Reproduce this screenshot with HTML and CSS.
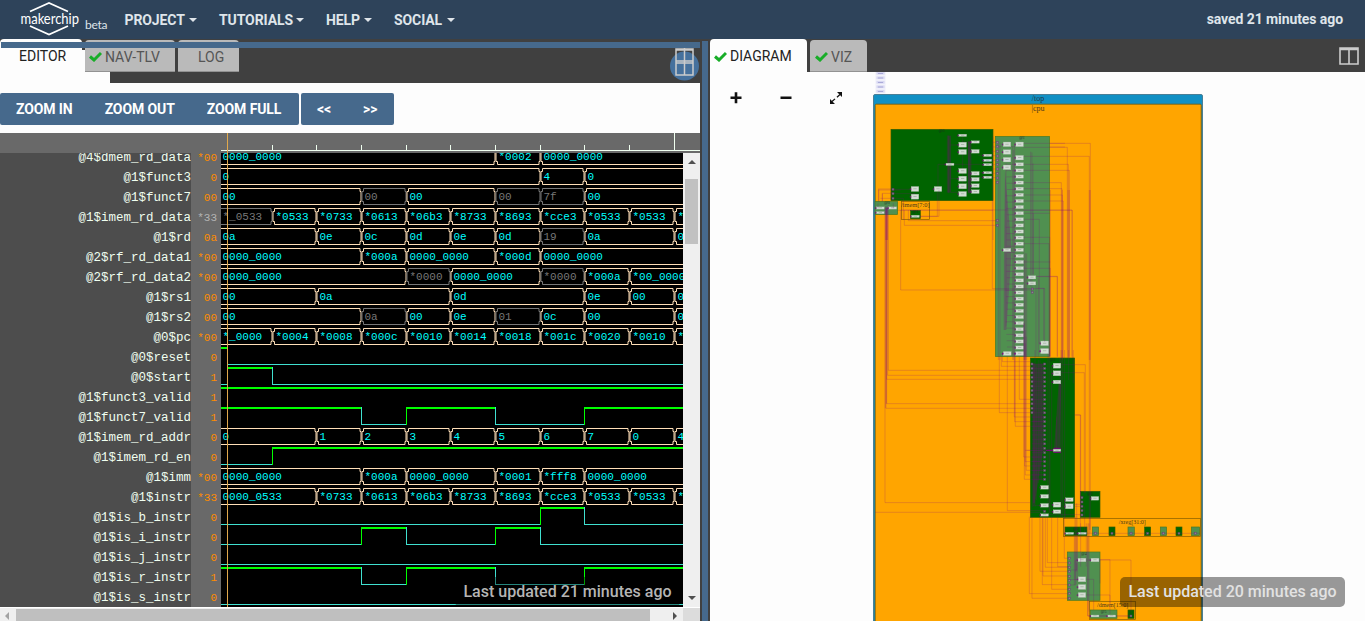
FILE: index.html
```html
<!DOCTYPE html>
<html lang="en">
<head>
<meta charset="utf-8">
<title>Makerchip</title>
<link rel="stylesheet" href="styles.css">
</head>
<body>
<header class="topbar">
  <div class="brand">
    <svg class="logo" width="64" height="39" viewBox="0 0 64 39">
      <path class="hex" d="M12 11.5 31 3 50 11.5M12 26 31 34.5 50 26"/>
      <text class="logo-text" x="2.5" y="24" textLength="58.5" lengthAdjust="spacingAndGlyphs">makerchip</text>
    </svg>
    <span class="beta">beta</span>
  </div>
  <nav class="menu">
    <a class="menu-item">PROJECT<i class="caret"></i></a>
    <a class="menu-item">TUTORIALS<i class="caret"></i></a>
    <a class="menu-item">HELP<i class="caret"></i></a>
    <a class="menu-item">SOCIAL<i class="caret"></i></a>
  </nav>
  <span class="saved">saved 21 minutes ago</span>
</header>
<main class="panes">
  <section class="pane left">
    <div class="tabstrip">
      <div class="under-tab"></div>
      <div class="tab active editor">EDITOR</div>
      <div class="tab nav"><svg class="check" width="13" height="11" viewBox="0 0 13 11"><path d="M1 5.5 5 9 12 2"/></svg>NAV-TLV</div>
      <div class="tab log">LOG</div>
      <div class="drop-line"></div>
      <svg class="split-icon" width="30" height="36" viewBox="0 0 30 36">
        <circle cx="14.500" cy="19" r="14.5"/>
        <path d="M6 2h17v14h-17zM6 14h17v14h-17zM14.500 1v27M6 3h17"/>
      </svg>
    </div>
    <div class="toolbar">
      <div class="group"><button class="btn">ZOOM IN</button><button class="btn">ZOOM OUT</button><button class="btn">ZOOM FULL</button></div>
      <div class="group arrows"><button class="btn">&lt;&lt;</button><button class="btn">&gt;&gt;</button></div>
    </div>
    <div class="ruler"><svg id="ruler" width="479" height="20" viewBox="221 133 479 20"></svg></div>
    <div class="viewer">
      <div class="names" id="names"></div>
      <div class="values" id="values"></div>
      <svg class="waves" id="waves" width="462" height="454" viewBox="221 153 462 454"></svg>
      <div class="vscroll">
        <i class="arrow up"></i><i class="thumb"></i><i class="arrow down"></i>
      </div>
    </div>
    <div class="hscroll"><i class="arrow prev"></i><i class="thumb"></i><i class="arrow next"></i><i class="corner"></i></div>
    <div class="toast">Last updated 21 minutes ago</div>
  </section>
  <div class="splitter"></div>
  <section class="pane right">
    <div class="tabstrip">
      <div class="tab active diagram"><svg class="check" width="13" height="11" viewBox="0 0 13 11"><path d="M1 5.5 5 9 12 2"/></svg>DIAGRAM</div>
      <div class="tab viz"><svg class="check" width="13" height="11" viewBox="0 0 13 11"><path d="M1 5.5 5 9 12 2"/></svg>VIZ</div>
      <svg class="columns-icon" width="20" height="18" viewBox="0 0 20 18"><path d="M1 1h18v16H1zM10 2v15M1 2.5h18"/></svg>
    </div>
    <svg class="graph" id="graph" width="655" height="549" viewBox="710 72 655 549"></svg>
    <div class="toast">Last updated 20 minutes ago</div>
  </section>
</main>
<script src="app.js"></script>
</body>
</html>
```
FILE: styles.css
```css
* { box-sizing: border-box; }
body { margin: 0; width: 1365px; height: 621px; overflow: hidden; display: flex; flex-direction: column; background: #fdfdfd; font-family: Roboto, "Liberation Sans", sans-serif; }
.topbar { height: 39px; flex: none; display: flex; align-items: center; background: #2e435a; color: #dfe5ea; font-weight: 700; }
.brand { display: flex; width: 124.5px; padding-left: 18px; height: 39px; }
.logo { flex: none; }
.hex { fill: none; stroke: #fff; stroke-width: 1.7; }
.logo-text { font: 15px Lato, sans-serif; fill: #fff; }
.beta { font: 12px/16px Lato, sans-serif; padding: 17px 0 0 3px; letter-spacing: -.3px; }
.menu { display: flex; font-size: 14px; letter-spacing: -.1px; flex: 1; }
.menu-item { display: flex; align-items: center; justify-content: space-between; height: 38px; margin-right: 22px; }
.menu-item:nth-child(1) { width: 72.5px; }
.menu-item:nth-child(2) { width: 85px; }
.menu-item:nth-child(3) { width: 46px; }
.menu-item:nth-child(4) { width: 60.5px; }
.caret { border: 4px solid transparent; border-top-color: #dfe5ea; border-bottom: 0; margin-top: 1px; }
.saved { font-size: 14px; letter-spacing: -.08px; margin: -2px 22px 0 0; }
.panes { display: flex; height: 582px; }
.pane { position: relative; display: flex; flex-direction: column; overflow: hidden; }
.left { width: 700px; }
.right { width: 655px; }
.splitter { width: 10px; background: #46698c; border: solid #404040; border-width: 2px 2px 0; }
.tabstrip { position: relative; display: flex; align-items: flex-start; flex: none; background: #404040; }
.left .tabstrip { height: 44px; }
.right .tabstrip { height: 33px; }
.under-tab { position: absolute; left: 0; top: 11px; width: 110px; height: 33px; background: #fdfdfd; }
.tab { position: relative; display: flex; align-items: center; height: 32px; margin-top: 1px; border-radius: 4px 4px 0 0; background: #bababa; border-bottom: 1px solid #929292; color: #555; font-size: 14px; padding-top: 2px; }
.tab.active { height: 33px; margin-top: 0; background: #fdfdfd; color: #222; border: 0; }
.editor { width: 82px; padding-left: 19px; }
.nav { width: 90px; margin-left: 3px; padding-left: 4px; }
.log { width: 61px; margin-left: 3px; padding-left: 20px; }
.diagram { width: 97px; padding-left: 4px; }
.viz { width: 57px; margin-left: 3px; padding-left: 5px; }
.check { fill: none; stroke: #18ad28; stroke-width: 3; margin-right: 3px; flex: none; }
.tab.active { padding-top: 1px; }
.drop-line { position: absolute; left: 1px; right: 0; top: 3px; height: 6px; background: #46698c; }
.split-icon { position: absolute; right: 0; top: 8px; fill: none; stroke: #ccc; stroke-width: 1.5; }
.split-icon circle { fill: #46719d; stroke: none; }
.columns-icon { margin: 8px 6px 0 auto; fill: none; stroke: #ccc; stroke-width: 1.6; }
.toolbar { display: flex; gap: 2px; height: 50px; padding-top: 10px; flex: none; background: #fdfdfd; }
.group { display: flex; width: 299px; height: 32px; background: #46698c; border-radius: 2px; }
.group.arrows { width: 93px; }
.btn { border: 0; background: none; color: #fff; font: 700 14px Roboto, sans-serif; letter-spacing: -.1px; padding: 0 16px 1px; white-space: nowrap; }
.ruler { height: 20px; flex: none; padding-left: 221px; background: #696969; }
.ruler svg, .waves, .graph { display: block; flex: none; }
.viewer { display: flex; height: 454px; overflow: hidden; flex: none; }
.names, .values { margin-top: -5px; height: 459px; overflow: hidden; text-align: right; font-family: "Liberation Mono", "Courier New", monospace; flex: none; }
.names { width: 191px; background: #4d4d4d; color: #f0fff0; font-size: 12.5px; }
.values { width: 30px; padding-right: 4px; background: #696969; color: #ff8c00; font-size: 11px; }
.row { height: 20px; line-height: 20px; }
.values .dim { color: #b5b5b5; }
.waves { background: #000; }
.bus { fill: none; stroke: #ffdfb8; }
.bus-label { font: 11px "Liberation Mono", "Courier New", monospace; fill: #0ff; }
.invalid.bus { stroke: #777; }
.invalid.bus-label { fill: #777; }
.low { stroke: #40e0d0; fill: none; }
.high { stroke: #0f0; stroke-width: 2; fill: none; }
.rise { stroke: #0f0; }
.cursor { stroke: #e0a84c; }
.tick { stroke: #f0fff0; }
.vscroll { width: 17px; display: flex; flex-direction: column; align-items: center; background: #efefef; }
.arrow { border: 4px solid transparent; width: 0; height: 0; flex: none; }
.up { border-bottom-color: #505050; border-top: 0; margin: 7px 0 15px; }
.vscroll .thumb { width: 13px; height: 65px; background: #c1c1c1; }
.down { border-top-color: #505050; border-bottom: 0; margin: auto 0 7px; }
.hscroll { display: flex; align-items: center; height: 14px; flex: none; background: #efefef; border-top: 1px solid #fff; }
.prev { border-right-color: #a3a3a3; border-left: 0; margin: 2px 7px 0 5px; }
.hscroll .thumb { width: 634px; height: 12px; background: #bfbfbf; margin-top: 1px; }
.next { border-left-color: #505050; border-right: 0; margin: 2px 0 0 23px; }
.corner { width: 17px; height: 14px; margin-left: auto; background: #dcdcdc; }
.toast { position: absolute; right: 20px; bottom: 14px; height: 30px; width: 225px; border-radius: 5px; background: rgba(0,0,0,.4); color: #e2e2e2; font-size: 16px; font-weight: 500; line-height: 30px; text-align: center; white-space: nowrap; }
.left .toast { width: 225px; color: #b5b5b5; }
.scope { fill: #ffa500; stroke: #7d5a00; stroke-width: 2; }
.dark { fill: #006400; stroke: #345c00; stroke-width: 2; }
.light { fill: #509050; stroke: #4a7a20; stroke-width: 2; }
.node { fill: #d3dcd3; stroke: #8ca48c; stroke-width: 1; }
.node-mark { fill: #9aaa9a; }
.pin { fill: #800080; opacity: .75; }
.port { fill: #9a8a9a; stroke: #702880; stroke-width: 1.5; opacity: .8; }
.wire { fill: none; stroke: #800080; stroke-width: 2.4; opacity: .25; }
.haze { fill: #800080; opacity: .28; }
.glabel { font: 8px "Liberation Serif", serif; fill: #222; opacity: .8; text-anchor: middle; }
.tool { stroke: #111; stroke-width: 2.6; fill: none; }
.expand { stroke: #111; stroke-width: 1.3; fill: none; }
.expand-tip { fill: #111; }
.ghost { fill: #d8d8f2; stroke: #efeffa; }
.ghost-mark { fill: #aaaad8; }
```
FILE: app.js
```js
const NS = 'http://www.w3.org/2000/svg';
function add(parent, tag, attrs, text) {
  const el = document.createElementNS(NS, tag);
  for (const k in attrs) el.setAttribute(k, attrs[k]);
  if (text) el.textContent = text;
  parent.appendChild(el);
  return el;
}

// Cycle boundaries along the time axis
const T = [227.5, 272.5, 316.5, 361.5, 406.5, 450.5, 495.5, 540.5, 584.5, 629.5, 674.5];
const END = 690;

// Bus segments are "startCycle:text", with ! for invalid data; levels are "startCycle:level"
const signals = [
  ['@4$dmem_rd_data', '*00', '0:0000_0000 6:*0002 7:0000_0000'],
  ['@1$funct3', '0', '0:0 7:4 8:0'],
  ['@1$funct7', '00', '0:00 3:!00 4:00 6:!00 7:!7f 8:00'],
  ['@1$imem_rd_data', '*33', '0:!*_0533 1:*0533 2:*0733 3:*0613 4:*06b3 5:*8733 6:*8693 7:*cce3 8:*0533 9:*0533 10:*'],
  ['@1$rd', '0a', '0:0a 2:0e 3:0c 4:0d 5:0e 6:0d 7:!19 8:0a 10:0'],
  ['@2$rf_rd_data1', '*00', '0:0000_0000 3:*000a 4:0000_0000 6:*000d 7:0000_0000'],
  ['@2$rf_rd_data2', '*00', '0:0000_0000 4:!*0000 5:0000_0000 7:!*0000 8:*000a 9:*00_0000'],
  ['@1$rs1', '00', '0:00 2:0a 5:0d 8:0e 9:00 10:0'],
  ['@1$rs2', '00', '0:00 3:!0a 4:00 5:0e 6:!01 7:0c 8:00 10:0'],
  ['@0$pc', '*00', '0:*_0000 1:*0004 2:*0008 3:*000c 4:*0010 5:*0014 6:*0018 7:*001c 8:*0020 9:*0010 10:*'],
  ['@0$reset', '0', 'L -1:1 0:0'],
  ['@0$start', '1', 'L -1:0 0:1 1:0'],
  ['@1$funct3_valid', '1', 'L -1:1'],
  ['@1$funct7_valid', '1', 'L -1:1 3:0 4:1 6:0 8:1'],
  ['@1$imem_rd_addr', '0', '0:0 2:1 3:2 4:3 5:4 6:5 7:6 8:7 9:0 10:4'],
  ['@1$imem_rd_en', '0', 'L -1:0 1:1'],
  ['@1$imm', '*00', '0:0000_0000 3:*000a 4:0000_0000 6:*0001 7:*fff8 8:0000_0000'],
  ['@1$instr', '*33', '0:0000_0533 2:*0733 3:*0613 4:*06b3 5:*8733 6:*8693 7:*cce3 8:*0533 9:*0533 10:*'],
  ['@1$is_b_instr', '0', 'L -1:0 7:1 8:0'],
  ['@1$is_i_instr', '0', 'L -1:0 3:1 4:0 6:1 7:0'],
  ['@1$is_j_instr', '0', 'L -1:0'],
  ['@1$is_r_instr', '1', 'L -1:1 3:0 4:1 6:0 8:1'],
  ['@1$is_s_instr', '0', 'L -1:0']
];

const names = document.getElementById('names');
const values = document.getElementById('values');
const waves = document.getElementById('waves');
signals.forEach(([name, value, data], i) => {
  for (const [box, text] of [[names, name], [values, value]]) {
    const row = document.createElement('div');
    row.className = 'row' + (i === 3 && box === values ? ' dim' : '');
    row.textContent = text;
    box.appendChild(row);
  }
  const y = 157 + 20 * i, hi = y - 9, lo = y + 7.5;
  const level = data.startsWith('L ');
  const segs = (level ? data.slice(2) : data).split(' ').map(s => s.split(':'));
  segs.forEach(([start, v], k) => {
    const s = +start;
    const x1 = s < 0 || (!level && s === 0) ? 215 : T[s];
    const x2 = k + 1 < segs.length ? T[+segs[k + 1][0]] : END;
    if (level) {
      if (k) add(waves, 'path', { class: v === '1' ? 'rise' : 'low', d: `M${x1} ${hi - 1}V${lo + .5}` });
      add(waves, 'path', { class: v === '1' ? 'high' : 'low', d: v === '1' ? `M${x1 - .5} ${hi}H${x2}` : `M${x1} ${lo}H${x2}` });
      return;
    }
    const bad = v[0] === '!' ? ' invalid' : '';
    const t = y - 8.5, a = x1 + .5, b = x2 - .5;
    add(waves, 'path', { class: 'bus' + bad, d: `M${a + 1.5} ${t}H${b - 1}V${t + 3}H${b}V${lo - 3}H${b - 1}V${lo}H${a + 1.5}V${lo - 3}H${a}V${t + 3}H${a + 1.5}Z` });
    add(waves, 'text', { class: 'bus-label' + bad, x: s === 0 ? 222.5 : x1 + 3, y: y + 3 }, v.replace('!', ''));
  });
});
add(waves, 'path', { class: 'cursor', d: 'M227.5 153V607' });

const ruler = document.getElementById('ruler');
add(ruler, 'path', { class: 'tick', d: 'M221 150.5H700' });
T.slice(1).forEach((x, i) => add(ruler, 'path', { class: 'tick', d: `M${x} ${i === 9 ? 133 : 145}V151` }));
add(ruler, 'path', { class: 'cursor', d: 'M227.5 133V153' });

const graph = document.getElementById('graph');
add(graph, 'path', { class: 'tool', d: 'M730.5 97.8H741.5M736 92.3V103.3M780.5 97.8H791.5' });
add(graph, 'path', { class: 'expand', d: 'M832 101.500 840 94.500', 'stroke-dasharray': '4 2.6' });
add(graph, 'path', { class: 'expand-tip', d: 'M842 92V97L837 92ZM830 104V99L835 104Z' });
for (let k = 0; k < 5; k++) {
  add(graph, 'rect', { class: 'ghost', x: 876, y: 71.500 + k * 4.5, width: 9, height: 3.5 });
  add(graph, 'rect', { class: 'ghost-mark', x: 878, y: 73 + k * 4.5, width: 5, height: 1 });
}
add(graph, 'rect', { x: 873.5, y: 94.500, width: 329, height: 540, rx: 1.5, fill: '#1190c4', stroke: '#4a7f96' });
add(graph, 'rect', { x: 875.2, y: 104.2, width: 326, height: 530, rx: 1, fill: '#ffa500', stroke: '#7d5a00', 'stroke-width': .8 });
add(graph, 'text', { class: 'glabel', x: 1038, y: 100.500 }, '/top');
add(graph, 'text', { class: 'glabel', x: 1038, y: 110.500 }, '|cpu');

// Drawing sheets work in third-of-a-pixel units from their own origin
function sheet(x, y) { return add(graph, 'g', { transform: `translate(${x} ${y}) scale(.3333)` }); }
function nums(s) { return s.trim().split(/\s*,\s*/).map(p => p.trim().split(/\s+/).map(Number)); }
function boxes(g, cls, s) { nums(s).forEach(([x, y, x2, y2]) => add(g, 'rect', { class: cls, x, y, width: x2 - x, height: y2 - y })); }
function nodes(g, w, h, s) {
  nums(s).forEach(([x, y]) => {
    add(g, 'rect', { class: 'node', x: x - w / 2, y: y - h / 2, width: w, height: h });
    add(g, 'rect', { class: 'node-mark', x: x - 5, y: y - 1.5, width: 10, height: 2 });
    add(g, 'rect', { class: 'pin', x: x - w / 2 - 4, y: y - 2, width: 4, height: 5 });
  });
}
function ports(g, s) { nums(s).forEach(([x, y]) => add(g, 'rect', { class: 'port', x: x - 3, y: y - 3, width: 6, height: 6 })); }
function wires(g, s) { s.trim().split(/\s*;\s*/).forEach(d => d && add(g, 'path', { class: 'wire', d: 'M' + d })); }
function label(g, x, y, text, size) { add(g, 'text', { class: 'glabel', x, y, style: `font-size:${size}px` }, text); }
function range(a, b, n, f) { return Array.from({ length: n }, (_, i) => f(a + (b - a) * i / (n - 1))).join(','); }

const a = sheet(865, 70), b = sheet(980, 120), c = sheet(1000, 350), d = sheet(1010, 480), e = sheet(870, 190);
boxes(a, 'dark', '78 178 384 392');
boxes(a, 'light', '30 394 98 434');
boxes(a, 'scope', '109 394 194 448');
boxes(a, 'dark', '137 421 166 446');
boxes(b, 'light', '46 49 209 710');
boxes(c, 'dark', '91 24 224 502,241 424 300 502');
boxes(d, 'scope', '161 115 572 169,238 364 376 418');
boxes(d, 'dark', '165 141 231 167,297 141 315 167,404 141 422 167,498 141 516 167,354 390 372 415');
boxes(d, 'light', '247 141 266 167,354 141 373 167,451 141 470 167,544 141 569 167,172 216 270 361,241 390 321 415');

// Long routes between pipeline stages
wires(e, `92 60V300H486;92 60H606V500;103 60V106H380;115 60V92H380;45 55V938H480;48 50V655H480;50 50V641H480;50 55V568H480;53 55V556H480;55 45V541H480;
46 50V655;49 50V641;15 967H513;367 30V296H524V455;388 500V668H480;394 500V529H480;397 500V515H480;412 500V962H520;433 500V681H520;436 500V709H520;434 490V695H520;
448 500V628H480;463 400V868H520;466 420V855H520;469 440V841H520;464 440V828H520;466 460V815H520;461 400V801H520;478 980V1211H595;486 980V1225H595;510 980V1144H595;
517 980V1184H595;519 980V1158H595;526 980V1132H595;532 980V1118H595;545 980V1198H595;563 980V1130H595;583 980V1105H595;615 980V1170;618 980V1184;621 980V1144;632 1000V1130;
594 500V0;598 0V500;658 0V1020;661 0V1020;541 0V500;577 0V510;562 500V260H500;616 675H632V960;649 1000V1130;654 1000V1278H662;657 1000V1265;690 1109H720V1240;
26 35V0H92;37 35V10H65;63 33V5;207 0V79H150;24 40V55;70 40V55`);
wires(a, `85 358H140;85 371H150V380;85 385H115V450;98 421H384;217 366V439H165;219 350V283H243;247 196V367H283;251 196V370;255 225H282;257 290V326H282;293 202V360;
310 216H320;310 216V370;314 216V370;318 216V367;290 216H335;267 283H357;340 256H357;341 308H357;335 322H357;384 217H397;380 231H397;380 244H397;380 257H397;380 271H397;380 284H397;380 297H397;
380 310H397;380 323H397;384 200V510;39 357H78;41 357V394;46 385H78;52 371V394;475 220H600;475 231H600;480 230V510;505 230V510;491 260V510`);
add(a, 'path', { class: 'haze', d: 'M411 290 420 310 436 510H419Z' });
add(a, 'path', { class: 'haze', d: 'M309 215H317V368H309ZM248 197H258V366H248ZM61 415H69V510H61Z' });
nodes(a, 23, 15, '293 224,293 246,293 303,293 326,293 349,293 372,150 357,150 380,219 357');
nodes(a, 23, 11, '331 244,331 310,331 328,331 347,331 365');
nodes(a, 24, 7, '293 196,331 216,368 256,368 271,368 284,368 308,368 322,255 283,46 414,83 414,46 428,151 439');
ports(a, '84 358,84 371,84 385');
label(a, 230, 187, '@0', 12); label(a, 66, 402, '@0', 12); label(a, 151, 430, '@1', 12); label(a, 151, 411, '/imem[7:0]', 19);

wires(b, `130 70H331V720;130 82H262V720;130 109H328V720;130 133H265V720;130 151H268V720;130 188H244V720;130 206H246V720;130 225H247V720;130 243H250V720;130 271H277V720;
209 280H130;130 298H178V670;130 352H209V710;130 371H207V710;130 426H211;130 445H211V710;170 469H232V710;140 400V720;136 400V720;134 420V720;132 300V720;160 280V470;
55 68V720;60 68V720;65 80H55;152 95V500;156 97V500;159 130V462;104 70V710;98 80V720;101 90V720;168 487V710;175 475V710;191 505V660;170 505H193;78 130V620;87 80H105`);
for (let k = 0; k < 31; k++) wires(b, `${77 + (k % 5)} ${133 + k * 18.9}H107`);
add(b, 'path', { class: 'haze', d: 'M75 150 95 390 79 630H71L72 400Z' });
nodes(b, 23, 14, '81 73,81 96,81 119,81 142,119 73,119 113,194 670,194 694');
nodes(b, 23, 10, range(133, 701, 32, y => `119 ${y}`) + ',81 390,81 701,156 472,156 490');
ports(b, '52 68,52 80,52 94,52 108,52 121,52 134,52 147,52 161,52 174,52 187,52 302,52 316,157 507,157 517');
label(b, 126, 58, '@1', 12);

wires(c, `183 0V502;187 0V502;194 0V502;180 24V300;206 0V90;220 0V100;182 44H256V430;182 68H253V430;224 195H241V460;105 0V470;100 40V470;103 40V465;98 40V470;109 50V450;115 30V400;
120 30V390;124 40V390;150 300V490;75 301H160;80 301H160;100 466H123;124 494H240;222 463H246;222 469H246;230 460V502;170 300V200;195 450V502;144 0V470;148 0V490;155 50V300`);
for (let k = 0; k < 27; k++) wires(c, `96 ${42 + k * 13.3}H140`);
add(c, 'path', { class: 'haze', d: 'M99 42H131V290L104 460H99ZM176 100H184L179 298H162Z' });
nodes(c, 23, 15, '171 47,171 70,171 464,208 469,134 3');
nodes(c, 23, 11, '171 96,134 412,134 439,134 466,208 449,171 485,285 445,22 10,59 10');
nodes(c, 23, 7, '134 495,171 301');
add(c, 'path', { class: 'wire', d: 'M138 301H158M160 295H183M160 307H183', style: 'opacity:1;stroke-width:3' });
ports(c, range(42, 188, 12, y => `96 ${y}`) + ',' + range(42, 388, 27, y => `134 ${y}`) + ',134 484,246 443,246 456,246 469,246 482,246 495');
label(c, 158, 34, '@2', 12); label(c, 270, 434, '@3', 12);

wires(d, `180 160H570;228 240H270V310;266 240H363V403;228 298H251V390;228 345H300V402;233 170V408H361;265 408H361;178 299H210;182 270H200V250;182 315H196V240;193 170V315;198 170V275;202 170V298;211 100V160;224 80V160;240 100V160`);
nodes(d, 24, 11, '216 240,255 240');
nodes(d, 23, 15, '216 298,216 321,216 345');
nodes(d, 24, 6, '179 160,217 160,255 408,305 408');
ports(d, '178 236,178 249,178 262,178 275,178 289,178 302,178 315,178 328,178 341,178 355,256 160,306 160,363 160,413 160,460 160,507 160,556 160,363 408');
label(d, 222, 226, '@4', 12); label(d, 198, 151, '@2', 12); label(d, 281, 400, '@5', 12);
label(d, 367, 132, '/xreg[31:0]', 18); label(d, 308, 381, '/dmem[15:0]', 18);
```
